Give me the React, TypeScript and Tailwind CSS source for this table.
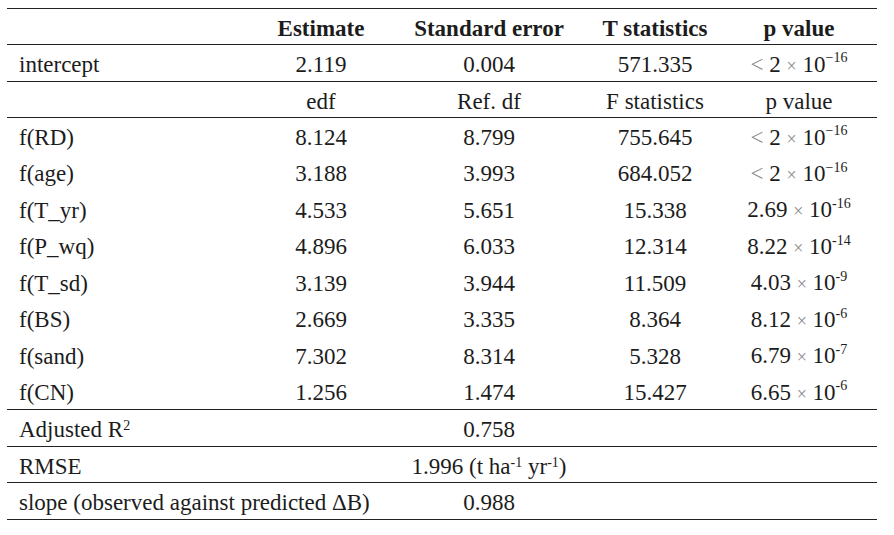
import React from "react";

// ─── GAM summary table ───────────────────────────────────────────────────────

type Row = { label: string; cells: React.ReactNode[] };

function Sci({ pre, lt, exp }: { pre?: string; lt?: boolean; exp: string }) {
  return (
    <span className="whitespace-nowrap">
      {lt && <span className="text-[#8a8a8a]">&lt; </span>}
      {lt ? "2" : pre} <span className="text-[18px] text-[#8a8a8a]">×</span> 10
      <sup className="top-[-0.65em] text-[14px]">{exp}</sup>
    </span>
  );
}

const smooths: Row[] = [
  { label: "f(RD)", cells: ["8.124", "8.799", "755.645", <Sci lt exp="−16" />] },
  { label: "f(age)", cells: ["3.188", "3.993", "684.052", <Sci lt exp="−16" />] },
  { label: "f(T_yr)", cells: ["4.533", "5.651", "15.338", <Sci pre="2.69" exp="-16" />] },
  { label: "f(P_wq)", cells: ["4.896", "6.033", "12.314", <Sci pre="8.22" exp="-14" />] },
  { label: "f(T_sd)", cells: ["3.139", "3.944", "11.509", <Sci pre="4.03" exp="-9" />] },
  { label: "f(BS)", cells: ["2.669", "3.335", "8.364", <Sci pre="8.12" exp="-6" />] },
  { label: "f(sand)", cells: ["7.302", "8.314", "5.328", <Sci pre="6.79" exp="-7" />] },
  { label: "f(CN)", cells: ["1.256", "1.474", "15.427", <Sci pre="6.65" exp="-6" />] },
];

function Cells({ cells, bold }: { cells: React.ReactNode[]; bold?: boolean }) {
  return (
    <>
      {cells.map((c, i) => (
        <td key={i} className={`text-center ${bold ? "font-bold" : ""}`}>
          {c}
        </td>
      ))}
    </>
  );
}

export default function App() {
  return (
    <div
      className="h-[535px] w-[894px] bg-white pl-[7px] pt-[8px] text-[23px] leading-[28px] text-[#1c1c1c]"
      style={{ fontFamily: '"Liberation Serif", "Times New Roman", serif' }}
    >
      <table className="w-[870px] table-fixed border-collapse [&_td]:pt-[4px]">
        <colgroup>
          <col className="w-[246px]" />
          <col className="w-[136px]" />
          <col className="w-[200px]" />
          <col className="w-[132px]" />
          <col className="w-[156px]" />
        </colgroup>
        <tbody>
          <tr className="h-[36px] border-y border-[#222]">
            <td />
            <Cells bold cells={["Estimate", "Standard error", "T statistics", "p value"]} />
          </tr>
          <tr className="h-[37px] border-b border-[#222]">
            <td className="pl-[12px]">intercept</td>
            <Cells cells={["2.119", "0.004", "571.335", <Sci lt exp="−16" />]} />
          </tr>
          <tr className="h-[36px] border-b border-[#222]">
            <td />
            <Cells cells={["edf", "Ref. df", "F statistics", "p value"]} />
          </tr>
          {smooths.map((r, i) => (
            <tr
              key={r.label}
              className={`h-[36.5px] ${i === smooths.length - 1 ? "border-b border-[#222]" : ""}`}
            >
              <td className="pl-[12px]">{r.label}</td>
              <Cells cells={r.cells} />
            </tr>
          ))}
          <tr className="h-[37px] border-b border-[#222]">
            <td className="pl-[12px]">
              Adjusted R<sup className="text-[14px]">2</sup>
            </td>
            <td />
            <td className="text-center">0.758</td>
            <td />
            <td />
          </tr>
          <tr className="h-[36px] border-b border-[#222]">
            <td className="pl-[12px]">RMSE</td>
            <td />
            <td className="whitespace-nowrap text-center">
              1.996 (t ha<sup className="text-[14px]">-1</sup> yr<sup className="text-[14px]">-1</sup>)
            </td>
            <td />
            <td />
          </tr>
          <tr className="h-[37px] border-b border-[#222]">
            <td className="whitespace-nowrap pl-[12px]">slope (observed against predicted ΔB)</td>
            <td />
            <td className="text-center">0.988</td>
            <td />
            <td />
          </tr>
        </tbody>
      </table>
    </div>
  );
}
